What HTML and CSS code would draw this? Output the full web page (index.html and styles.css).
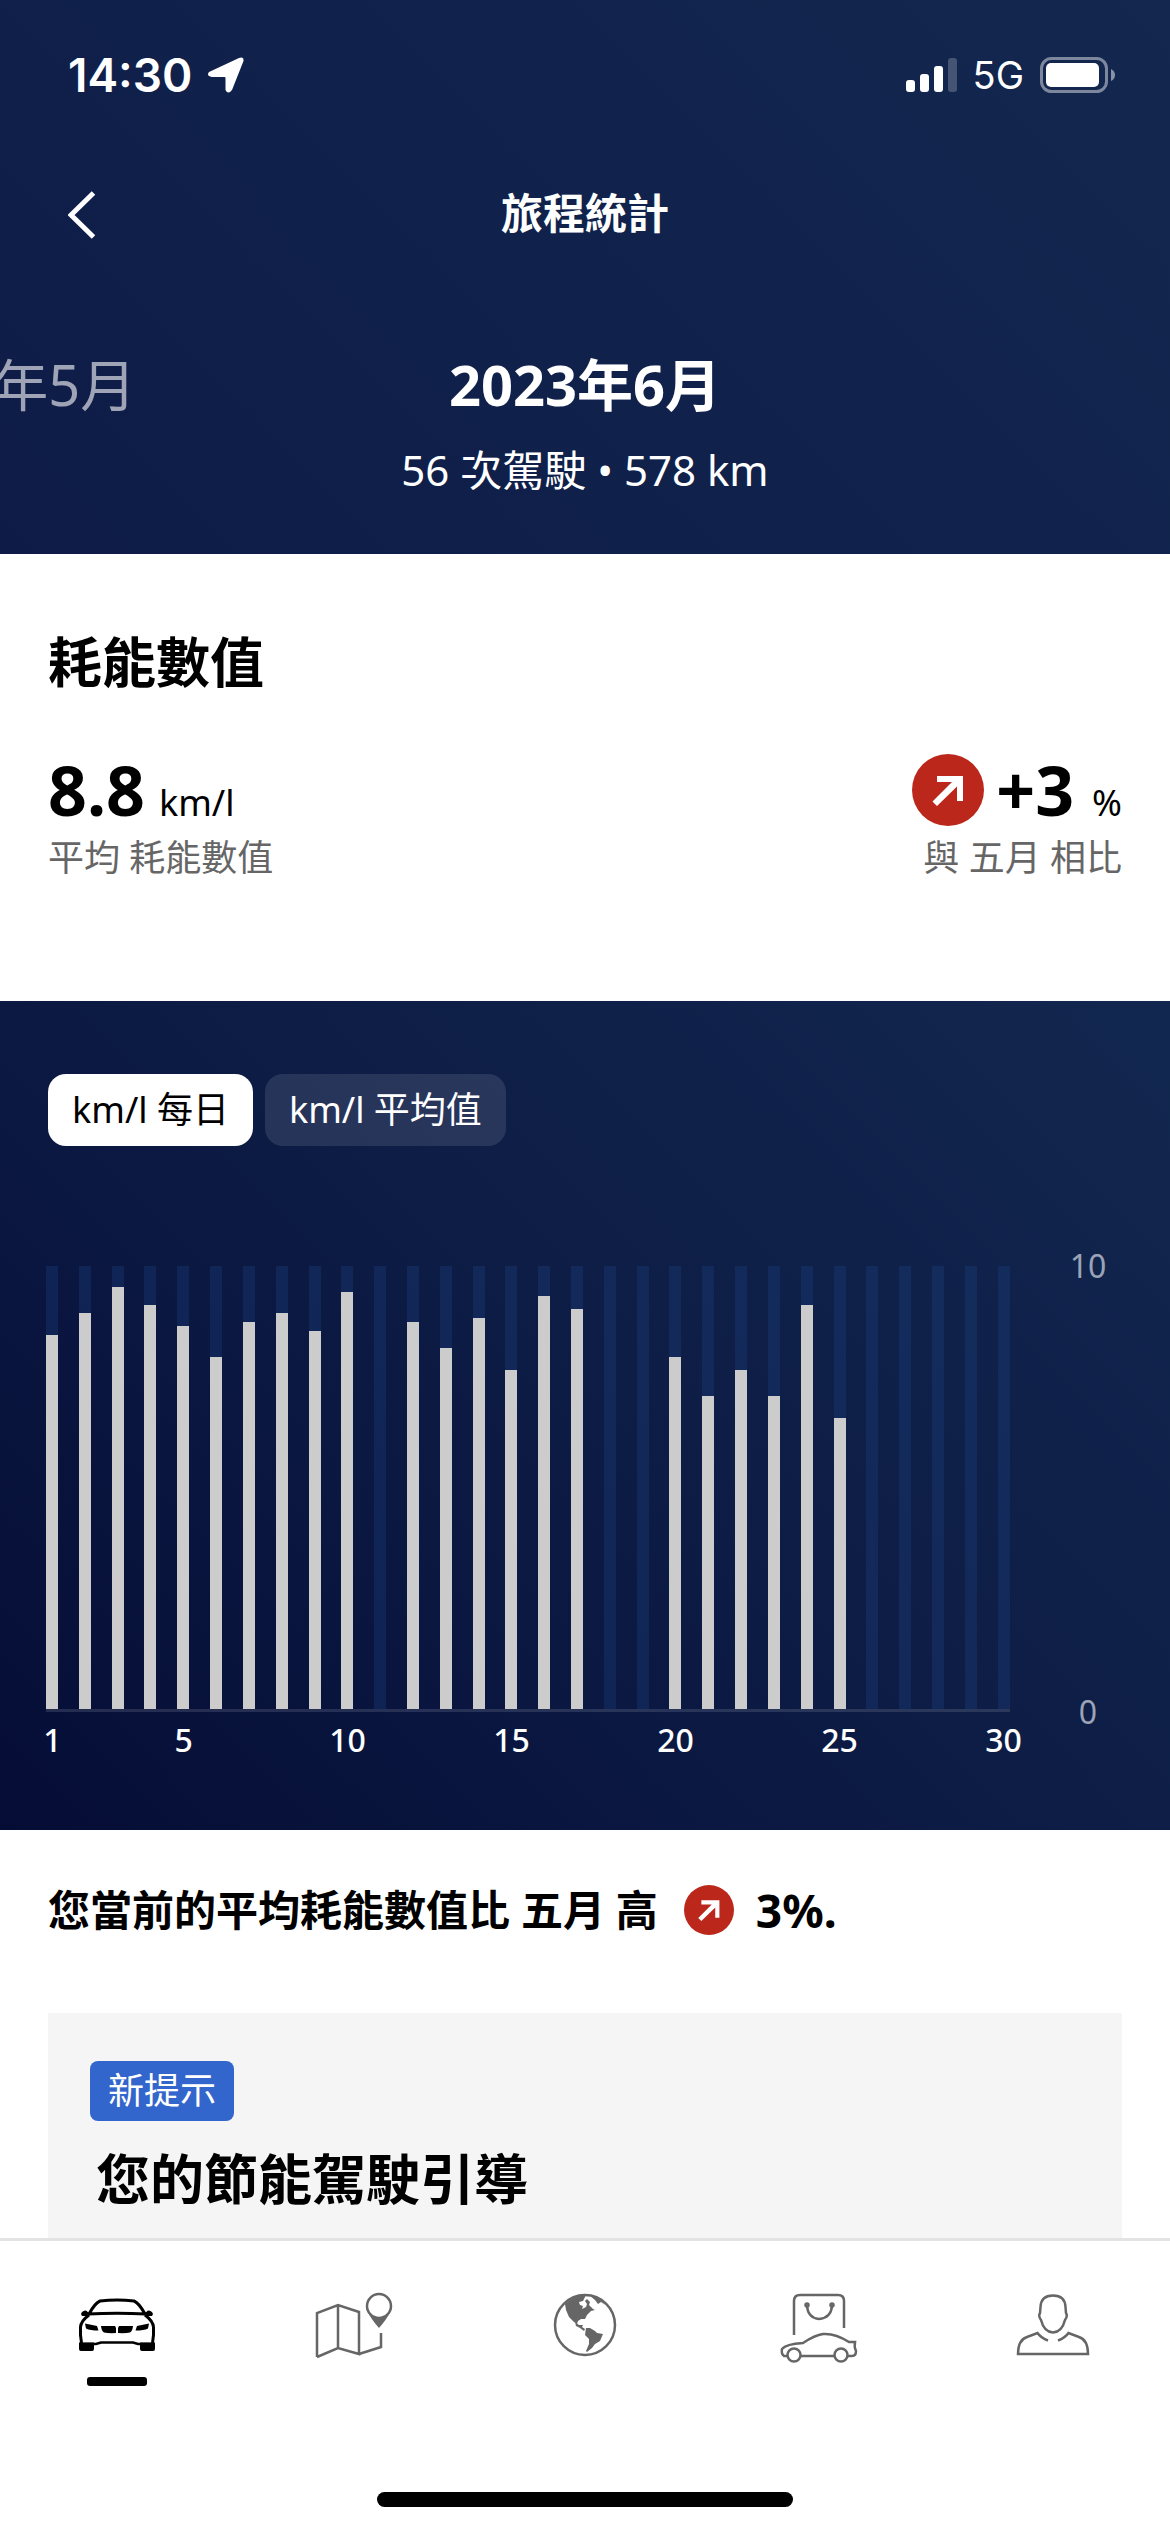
FILE: index.html
```html
<!DOCTYPE html>
<html lang="zh-Hant">
<head>
<meta charset="utf-8">
<meta name="viewport" content="width=device-width, initial-scale=1">
<title>旅程統計</title>
<link rel="stylesheet" href="styles.css">
</head>
<body>
<div class="app">
  <header class="hero">
    <div class="status">
      <div class="status-side">
        <span class="clock">14:30</span>
        <svg class="location" viewBox="0 0 36 36" aria-hidden="true"><path d="M31 1Q36 -1 35.500 4L24 33Q20 38 17.500 33V21Q17.500 20 16.500 20H4Q-2 19 1 15Z" fill="#fff"/></svg>
      </div>
      <div class="status-side">
        <svg class="signal" viewBox="0 0 51 34" aria-hidden="true"><g fill="#fff"><rect y="22" width="9" height="12" rx="3"/><rect x="14" y="16" width="9" height="18" rx="3"/><rect x="28" y="8" width="9" height="26" rx="3"/><rect x="42" width="9" height="34" rx="3" opacity=".22"/></g></svg>
        <span class="network">5G</span>
        <svg class="battery" viewBox="0 0 75 36" aria-hidden="true"><rect x="1.500" y="1.500" width="65" height="33" rx="10" fill="none" stroke="#fff" stroke-opacity=".45" stroke-width="3"/><rect x="6" y="6" width="53" height="24" rx="5" fill="#fff"/><path d="M71 12Q75 14 75 18T71 24Z" fill="#fff" opacity=".5"/></svg>
      </div>
    </div>
    <div class="titlebar">
      <button class="back" type="button" aria-label="返回"><svg viewBox="0 0 28 48" aria-hidden="true"><path d="M25.500 2L3 24L25.500 46" fill="none" stroke="#fff" stroke-width="5"/></svg></button>
      <h1 class="title">旅程統計</h1>
    </div>
    <nav class="months" aria-label="月份">
      <button class="month month-prev" type="button">2023年5月</button>
      <button class="month month-current" type="button" aria-current="true">2023年6月</button>
      <span></span>
    </nav>
    <p class="summary">56 次駕駛 • 578 km</p>
  </header>

  <main class="content">
    <section class="stats">
      <h2 class="heading">耗能數值</h2>
      <div class="stat-row">
        <div class="stat">
          <p class="value"><strong class="number">8.8</strong><span class="unit">km/l</span></p>
          <p class="caption">平均 耗能數值</p>
        </div>
        <div class="stat stat-end">
          <p class="value">
            <svg class="trend" viewBox="0 0 72 72" aria-hidden="true"><circle cx="36" cy="36" r="36" fill="#bb271b"/><path d="M25 22H51V47H45V32.500L25 52L20.500 47.500L40 28H25Z" fill="#fff"/></svg>
            <strong class="number">+3</strong><span class="unit">%</span>
          </p>
          <p class="caption">與 五月 相比</p>
        </div>
      </div>
    </section>

    <section class="chart">
      <div class="toggles">
        <button class="toggle toggle-on" type="button" aria-pressed="true">km/l 每日</button>
        <button class="toggle" type="button" aria-pressed="false">km/l 平均值</button>
      </div>
      <div class="plot">
        <div class="bars">
          <div class="track"><div class="bar" style="height:84.5%"></div></div>
          <div class="track"><div class="bar" style="height:89.3%"></div></div>
          <div class="track"><div class="bar" style="height:95.2%"></div></div>
          <div class="track"><div class="bar" style="height:91.2%"></div></div>
          <div class="track"><div class="bar" style="height:86.4%"></div></div>
          <div class="track"><div class="bar" style="height:79.5%"></div></div>
          <div class="track"><div class="bar" style="height:87.3%"></div></div>
          <div class="track"><div class="bar" style="height:89.3%"></div></div>
          <div class="track"><div class="bar" style="height:85.4%"></div></div>
          <div class="track"><div class="bar" style="height:94.1%"></div></div>
          <div class="track"></div>
          <div class="track"><div class="bar" style="height:87.3%"></div></div>
          <div class="track"><div class="bar" style="height:81.5%"></div></div>
          <div class="track"><div class="bar" style="height:88.3%"></div></div>
          <div class="track"><div class="bar" style="height:76.6%"></div></div>
          <div class="track"><div class="bar" style="height:93.2%"></div></div>
          <div class="track"><div class="bar" style="height:90.3%"></div></div>
          <div class="track"></div>
          <div class="track"></div>
          <div class="track"><div class="bar" style="height:79.5%"></div></div>
          <div class="track"><div class="bar" style="height:70.7%"></div></div>
          <div class="track"><div class="bar" style="height:76.6%"></div></div>
          <div class="track"><div class="bar" style="height:70.7%"></div></div>
          <div class="track"><div class="bar" style="height:91.2%"></div></div>
          <div class="track"><div class="bar" style="height:65.7%"></div></div>
          <div class="track"></div>
          <div class="track"></div>
          <div class="track"></div>
          <div class="track"></div>
          <div class="track"></div>
        </div>
        <div class="scale"><span>10</span><span>0</span></div>
        <div class="days">
          <span class="day">1</span><span class="day day-5">5</span><span class="day day-10">10</span><span class="day day-15">15</span><span class="day day-20">20</span><span class="day day-25">25</span><span class="day day-30">30</span>
        </div>
      </div>
    </section>

    <section class="insight">
      <p class="compare">
        <span>您當前的平均耗能數值比 五月 高</span>
        <svg class="trend-small" viewBox="0 0 72 72" aria-hidden="true"><circle cx="36" cy="36" r="36" fill="#bb271b"/><path d="M25 22H51V47H45V32.500L25 52L20.500 47.500L40 28H25Z" fill="#fff"/></svg>
        <span class="percent">3%.</span>
      </p>
      <article class="card">
        <span class="badge">新提示</span>
        <h2 class="heading card-title">您的節能駕駛引導</h2>
      </article>
    </section>
  </main>

  <footer class="dock">
    <nav class="tabs" aria-label="主選單">
      <a class="tab tab-on" href="#car" aria-label="車輛">
        <svg class="icon" viewBox="0 0 80 80" fill="none" stroke="currentColor" stroke-width="3" aria-hidden="true">
          <path d="M12 31Q18 20 23 18Q40 16 57 18Q62 20 68 31M11 31Q40 29.500 69 31M12 32Q4 38 3.500 44Q3 52 4.500 60M68 32Q76 38 76.500 44Q77 52 75.500 60"/>
          <path d="M4 61H19L24 59.500H56L61 61H76" stroke-width="2.500"/>
          <path d="M2 59.500H17V66Q17 68 15 68H4Q2 68 2 66ZM63 59.500H78V66Q78 68 76 68H65Q63 68 63 66ZM4 31Q5 27.500 9 27.500L12 30L10 33H5ZM76 31Q75 27.500 71 27.500L68 30L70 33H75ZM8 40.500L20 43L21.500 47.500Q13 47.500 9 45.500ZM72 40.500L60 43L58.500 47.500Q67 47.500 71 45.500ZM24 43H38L39 45V50Q32 50.500 27 49.500Q24.500 48 24 43ZM56 43H42L41 45V50Q48 50.500 53 49.500Q55.500 48 56 43Z" fill="currentColor" stroke="none"/>
        </svg>
        <span class="marker"></span>
      </a>
      <a class="tab" href="#map" aria-label="地圖">
        <svg class="icon" viewBox="0 0 80 80" fill="none" stroke="currentColor" stroke-width="2.500" aria-hidden="true">
          <path d="M6 74V30L27 22L48 29V71L27 65L6 74M27 22V65M48 71L70 64V50"/><circle cx="68" cy="23" r="12"/><path d="M57 29Q60 36 68 45Q76 36 79 29Q75 35 68 35Q61 35 57 29Z" fill="currentColor" stroke="none"/>
        </svg>
      </a>
      <a class="tab" href="#explore" aria-label="探索">
        <svg class="icon" viewBox="0 0 80 80" fill="none" stroke="currentColor" stroke-width="2.500" aria-hidden="true">
          <circle cx="40" cy="42" r="30"/>
          <path d="M20 21Q29 12 41 12L39 16L38 18L34 19L35 22L38 23L37 26L41 24L42 21L40 18L42 16L45 19L44 22L48 26L50 27L46 28L42 32L40 36L36 36L33 38L32 41L29 39L24 34L21 27ZM44 12Q54 14 60 22L56 19L53 21L50 17ZM30 39L34 42L38 42L37 44L40 46L39 48L35 45L31 43ZM41 45L45 45L50 48L52 50L58 51L55 58L50 61L47 65L42 69L41 68L44 61L44 56L40 52Z" fill="currentColor" stroke="none"/>
        </svg>
      </a>
      <a class="tab" href="#shop" aria-label="商店">
        <svg class="icon" viewBox="0 0 80 80" fill="none" stroke="currentColor" stroke-width="2.500" aria-hidden="true">
          <path d="M15 52V18Q15 12 21 12H59Q65 12 65 18V45M28 23Q29 35 40 36Q52 35 53 23"/><circle cx="28" cy="22" r="1.500"/><circle cx="53" cy="22" r="1.500"/>
          <path d="M8 73H5Q2 71 3 66Q7 61 24 60Q36 52 44 51Q56 50 70 59H76Q75 64 77 68Q77 73 73 73H69M22 73H55"/><circle cx="15" cy="72" r="6.500"/><circle cx="62" cy="72" r="6.500"/>
        </svg>
      </a>
      <a class="tab" href="#profile" aria-label="個人檔案">
        <svg class="icon" viewBox="0 0 80 80" fill="none" stroke="currentColor" stroke-width="2.500" aria-hidden="true">
          <path d="M40 12.500Q52 12.500 52.500 24L53 30Q55 33 52 37Q49 49 40 49.500Q31 49 28 37Q25 33 27 30L27.500 24Q28 12.500 40 12.500Z"/>
          <path d="M35 57.500Q28 55 24.500 50L14 54Q5 57 5 71H75Q75 57 66 54L55.500 50Q52 55 45 57.500"/>
        </svg>
      </a>
    </nav>
    <div class="home-bar"></div>
  </footer>
</div>
</body>
</html>
```
FILE: styles.css
```css
* { box-sizing: border-box; }

body {
  margin: 0;
  background: #fff;
  color: #000;
  font-family: "Noto Sans", "Noto Sans CJK TC", sans-serif;
}

h1, h2, p { margin: 0; }

svg { display: block; flex: none; }

button {
  border: 0;
  padding: 0;
  background: none;
  color: inherit;
  font: inherit;
}

.app {
  display: flex;
  flex-direction: column;
  height: 100vh;
}

.hero {
  flex: none;
  overflow: hidden;
  padding-bottom: 54px;
  background: linear-gradient(225deg, #13274f 0%, #10224b 50%, #0e1b47 100%);
  color: #fff;
}

.status {
  display: flex;
  align-items: center;
  justify-content: space-between;
  height: 150px;
  padding: 0 55px 0 68px;
  font-family: Inter, "Liberation Sans", sans-serif;
}

.status-side { display: flex; align-items: center; gap: 16px; }
.clock { font-size: 46px; font-weight: 600; line-height: 56px; }
.location { width: 36px; height: 36px; }
.signal { width: 51px; height: 34px; }
.network { font-size: 38px; line-height: 48px; }
.battery { width: 75px; height: 36px; }

.titlebar {
  display: grid;
  grid-template-columns: 1fr auto 1fr;
  align-items: center;
  height: 130px;
  padding: 0 68px;
}

.back { justify-self: start; width: 28px; height: 48px; }
.back svg { width: 28px; height: 48px; }
.title { margin-bottom: 4px; font-size: 42px; line-height: 60px; }

.months {
  display: grid;
  grid-template-columns: 1fr auto 1fr;
  align-items: center;
  margin-top: 64px;
}

.month { font-size: 56px; line-height: 80px; white-space: nowrap; }
.month-prev { justify-self: start; margin-left: -136px; opacity: .6; }
.month-current { font-weight: 700; }

.summary {
  margin-top: 16px;
  font-size: 42px;
  line-height: 60px;
  text-align: center;
}

.content { flex: 1; min-height: 0; overflow: hidden; }

.stats { padding: 68px 48px 117px; }
.heading { font-size: 54px; line-height: 80px; }

.stat-row { display: flex; justify-content: space-between; margin-top: 48px; }
.stat-end { text-align: right; }
.value { display: flex; align-items: baseline; height: 80px; }
.stat-end .value { justify-content: flex-end; }
.number { font-size: 68px; line-height: 80px; }
.unit { margin-left: 14px; font-size: 36px; line-height: 48px; }
.stat-end .unit { margin-left: 18px; }
.trend { align-self: center; width: 72px; height: 72px; margin-right: 12px; }
.caption { margin-top: 2px; color: #666; font-size: 36px; line-height: 52px; }

.chart {
  padding: 73px 48px 70px;
  background: linear-gradient(225deg, #12274f 0%, #0d1c45 50%, #050d36 100%);
  color: #fff;
}

.toggles { display: flex; gap: 12px; }

.toggle {
  height: 72px;
  padding: 0 24px;
  border-radius: 18px;
  background: rgba(255, 255, 255, .11);
  font-size: 36px;
  line-height: 72px;
}

.toggle-on { background: #fff; color: #000; }

.plot {
  display: grid;
  grid-template-columns: 1fr 60px;
  column-gap: 48px;
  margin: 120px 4px 0 0;
}

.bars {
  display: flex;
  justify-content: space-between;
  height: 446px;
  margin-left: -2px;
  border-bottom: 3px solid rgba(255, 255, 255, .12);
}

.track {
  display: flex;
  align-items: flex-end;
  width: 12px;
  background: rgba(30, 70, 135, .3);
}

.bar { width: 12px; background: #ccc; }

.scale {
  display: flex;
  flex-direction: column;
  justify-content: space-between;
  align-items: center;
  margin: -20px 0;
  color: #9ca3b6;
  font-size: 32px;
  line-height: 40px;
}

.days {
  display: grid;
  grid-template-columns: repeat(30, 1fr);
  margin: 8px -10px 0 -12px;
  font-size: 32px;
  font-weight: 500;
  line-height: 40px;
}

.day { display: flex; justify-content: center; width: 100%; min-width: 0; }
.day-5 { grid-column: 5; }
.day-10 { grid-column: 10; }
.day-15 { grid-column: 15; }
.day-20 { grid-column: 20; }
.day-25 { grid-column: 25; }
.day-30 { grid-column: 30; }

.insight { padding: 50px 48px 0; }

.compare {
  display: flex;
  align-items: center;
  font-size: 42px;
  font-weight: 700;
  line-height: 60px;
}

.trend-small { width: 50px; height: 50px; margin: 0 22px 0 26px; }
.percent { font-size: 46px; }

.card {
  margin-top: 73px;
  padding: 48px 42px;
  background: #f5f5f5;
}

.badge {
  display: inline-block;
  padding: 0 18px;
  border-radius: 8px;
  background: #36c;
  color: #fff;
  font-size: 36px;
  line-height: 60px;
}

.card-title { margin: 18px 6px 0; }

.dock {
  display: flex;
  flex: none;
  flex-direction: column;
  align-items: center;
  justify-content: space-between;
  height: 294px;
  padding-bottom: 25px;
  border-top: 3px solid #e3e3e3;
  background: #fff;
}

.tabs { display: grid; grid-template-columns: repeat(5, 1fr); width: 100%; }

.tab {
  display: flex;
  flex-direction: column;
  align-items: center;
  padding-top: 42px;
  color: #666;
}

.tab-on { color: #000; }
.icon { width: 80px; height: 80px; overflow: visible; }

.marker {
  width: 60px;
  height: 9px;
  margin-top: 14px;
  border-radius: 3px;
  background: #000;
}

.home-bar { width: 416px; height: 15px; border-radius: 8px; background: #000; }
```
